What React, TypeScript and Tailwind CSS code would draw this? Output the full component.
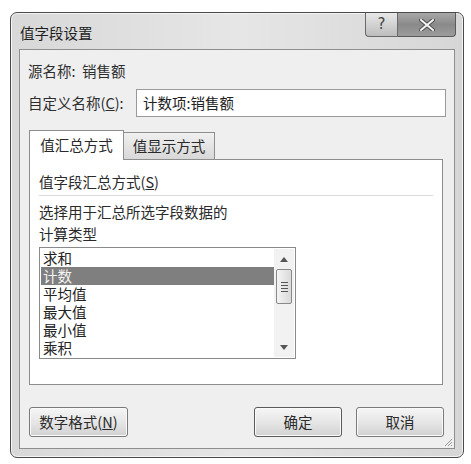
import React from "react";

const font = { fontFamily: '"Noto Sans CJK SC", "Noto Sans", sans-serif' };

function Btn({ children, w, def }: { children: React.ReactNode; w: string; def?: boolean }) {
  return (
    <div
      className={`${w} h-[30px] flex items-center justify-center rounded-[3px] border ${def ? "border-[#5a5a5a]" : "border-[#7a7a7a]"} bg-gradient-to-b from-[#f6f6f6] via-[#e6e6e6] to-[#d2d2d2] text-[14.5px] text-[#2a2a2a] shadow-[inset_0_0_0_1px_#fafafa]`}
    >
      {children}
    </div>
  );
}

export default function App() {
  const items = ["求和", "计数", "平均值", "最大值", "最小值", "乘积"];
  return (
    <div className="w-[471px] h-[464px] bg-white pt-[12px] pl-[10px]" style={font}>
      <div className="w-[454px] h-[446px] rounded-[7px] border border-[#4a4a4a] bg-gradient-to-r from-[#d8d8d8] via-[#e6e6e6] to-[#d6d6d6] flex flex-col px-[8px] pb-[8px] shadow-[inset_0_0_0_1px_#f4f4f4]">
        {/* title bar */}
        <div className="h-[36px] flex items-start justify-between shrink-0">
          <div className="pt-[10px] pl-[1px] text-[14.5px] text-[#1e1e1e] leading-[20px]">值字段设置</div>
          <div className="flex mr-[-1px]">
            <div className="w-[33px] h-[24px] rounded-bl-[4px] border border-t-0 border-[#6a6a6a] bg-gradient-to-b from-[#e8e8e8] to-[#bdbdbd] flex items-center justify-center text-[15px] text-[#444] leading-none" style={{ fontFamily: '"DejaVu Sans", sans-serif' }}>
              ?
            </div>
            <div className="w-[58px] h-[24px] rounded-br-[4px] border border-t-0 border-l-0 border-[#5a5a5a] bg-gradient-to-b from-[#a8a8a8] via-[#8a8a8a] to-[#9c9c9c] flex items-center justify-center">
              <svg width="16" height="12" viewBox="0 0 16 12">
                <path d="M2 1 L14 11 M14 1 L2 11" stroke="#505050" strokeWidth="4" strokeLinecap="round" />
                <path d="M2 1 L14 11 M14 1 L2 11" stroke="#f4f4f4" strokeWidth="2" strokeLinecap="round" />
              </svg>
            </div>
          </div>
        </div>
        {/* client */}
        <div className="flex-1 border border-[#8e8e8e] bg-[#efefef] flex flex-col px-[8px] pt-[11px] relative">
          <div className="h-[20px] leading-[20px] text-[14.5px] text-[#2e2e2e]">源名称:&nbsp;&nbsp;销售额</div>
          <div className="mt-[8px] flex items-center h-[28px]">
            <div className="w-[108px] text-[14.5px] text-[#2e2e2e]">
              自定义名称(<span className="underline">C</span>):
            </div>
            <div className="flex-1 h-[28px] border border-[#9a9a9a] bg-white flex items-center pl-[6px] text-[14.5px] text-[#222]">
              计数项:销售额
            </div>
          </div>
          {/* tabs */}
          <div className="mt-[12px] ml-[1px] mr-[3px] flex flex-col">
            <div className="flex items-end h-[30px]">
              <div className="w-[95px] h-[30px] border border-b-0 border-[#8e8e8e] bg-white flex items-center justify-center text-[14.5px] text-[#2a2a2a] relative z-10 -mb-[1px] pb-[2px]">
                值汇总方式
              </div>
              <div className="w-[91px] h-[27px] border border-l-0 border-b-0 border-[#8e8e8e] bg-gradient-to-b from-[#f0f0f0] to-[#d8d8d8] flex items-center justify-center text-[14.5px] text-[#2a2a2a]">
                值显示方式
              </div>
            </div>
            <div className="h-[226px] border border-[#8e8e8e] bg-white px-[9px] pt-[12px]">
              <div className="h-[20px] leading-[20px] text-[14.5px] text-[#2a2a2a]">
                值字段汇总方式(<span className="underline">S</span>)
              </div>
              <div className="mt-[3px] h-[1px] bg-[#dcdcdc]" />
              <div className="mt-[5px] leading-[22px] text-[14.5px] text-[#2a2a2a]">
                <div>选择用于汇总所选字段数据的</div>
                <div>计算类型</div>
              </div>
              <div className="mt-[2px] w-[257px] h-[112px] border border-[#8a8a8a] bg-white p-[1px] flex">
                <div className="flex-1 flex flex-col">
                  {items.map((t, i) => (
                    <div
                      key={t}
                      className={`h-[18px] leading-[18px] pl-[2px] text-[14.5px] ${i === 1 ? "bg-[#7f7f7f] text-[#f4f4f4]" : "text-[#222]"}`}
                    >
                      {t}
                    </div>
                  ))}
                </div>
                <div className="w-[20px] bg-[#f2f2f2] flex flex-col items-center">
                  <div className="h-[20px] flex items-center justify-center">
                    <svg width="8" height="5" viewBox="0 0 8 5"><path d="M0 5 L4 0 L8 5 Z" fill="#555" /></svg>
                  </div>
                  <div className="w-[16px] h-[35px] rounded-[2px] border border-[#8a8a8a] bg-gradient-to-r from-[#f4f4f4] to-[#dadada] flex flex-col items-center justify-center gap-[2px]">
                    <div className="w-[7px] h-[1px] bg-[#555]" />
                    <div className="w-[7px] h-[1px] bg-[#555]" />
                    <div className="w-[7px] h-[1px] bg-[#555]" />
                    <div className="w-[7px] h-[1px] bg-[#555]" />
                  </div>
                  <div className="flex-1" />
                  <div className="h-[20px] flex items-center justify-center">
                    <svg width="8" height="5" viewBox="0 0 8 5"><path d="M0 0 L4 5 L8 0 Z" fill="#555" /></svg>
                  </div>
                </div>
              </div>
            </div>
          </div>
          {/* buttons */}
          <div className="mt-[22px] ml-[1px] mr-[2px] flex items-center">
            <Btn w="w-[99px]">
              <span>
                数字格式(<span className="underline">N</span>)
              </span>
            </Btn>
            <div className="flex-1" />
            <Btn w="w-[88px]" def>
              确定
            </Btn>
            <div className="w-[14px]" />
            <Btn w="w-[88px]">取消</Btn>
          </div>
          <svg className="absolute right-[1px] bottom-[1px]" width="10" height="10" viewBox="0 0 10 10">
            <path d="M9 2 L2 9 M9 5 L5 9 M9 8 L8 9" stroke="#9a9a9a" strokeWidth="1" />
          </svg>
        </div>
      </div>
    </div>
  );
}
